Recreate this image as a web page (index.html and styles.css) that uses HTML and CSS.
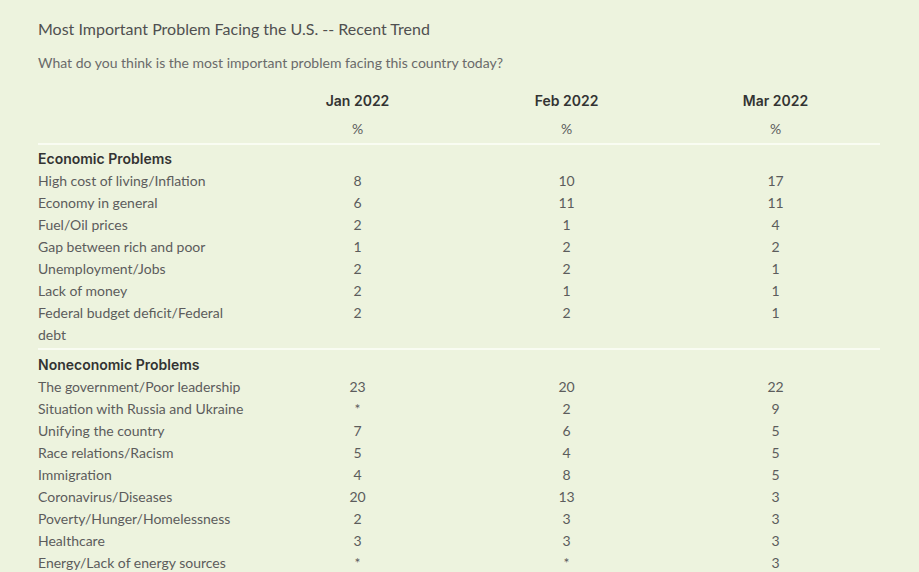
FILE: index.html
```html
<!DOCTYPE html>
<html>
<head>
<meta charset="utf-8">
<link rel="stylesheet" href="styles.css">
</head>
<body>
<div class="page">
  <h1 class="title">Most Important Problem Facing the U.S. -- Recent Trend</h1>
  <p class="subtitle">What do you think is the most important problem facing this country today?</p>
  <table class="trend">
    <colgroup>
      <col class="c-label"><col class="c-val"><col class="c-val"><col class="c-val">
    </colgroup>
    <thead>
      <tr class="h1"><th></th><th>Jan 2022</th><th>Feb 2022</th><th>Mar 2022</th></tr>
      <tr class="h2"><th></th><th>%</th><th>%</th><th>%</th></tr>
    </thead>
    <tbody>
      <tr class="sep"><td colspan="4"><div class="rule"></div></td></tr>
      <tr class="group"><td>Economic Problems</td><td></td><td></td><td></td></tr>
      <tr><td>High cost of living/Inflation</td><td>8</td><td>10</td><td>17</td></tr>
      <tr><td>Economy in general</td><td>6</td><td>11</td><td>11</td></tr>
      <tr><td>Fuel/Oil prices</td><td>2</td><td>1</td><td>4</td></tr>
      <tr><td>Gap between rich and poor</td><td>1</td><td>2</td><td>2</td></tr>
      <tr><td>Unemployment/Jobs</td><td>2</td><td>2</td><td>1</td></tr>
      <tr><td>Lack of money</td><td>2</td><td>1</td><td>1</td></tr>
      <tr><td>Federal budget deficit/Federal debt</td><td>2</td><td>2</td><td>1</td></tr>
      <tr class="sep sep-mid"><td colspan="4"><div class="rule"></div></td></tr>
      <tr class="group"><td>Noneconomic Problems</td><td></td><td></td><td></td></tr>
      <tr><td>The government/Poor leadership</td><td>23</td><td>20</td><td>22</td></tr>
      <tr><td>Situation with Russia and Ukraine</td><td>*</td><td>2</td><td>9</td></tr>
      <tr><td>Unifying the country</td><td>7</td><td>6</td><td>5</td></tr>
      <tr><td>Race relations/Racism</td><td>5</td><td>4</td><td>5</td></tr>
      <tr><td>Immigration</td><td>4</td><td>8</td><td>5</td></tr>
      <tr><td>Coronavirus/Diseases</td><td>20</td><td>13</td><td>3</td></tr>
      <tr><td>Poverty/Hunger/Homelessness</td><td>2</td><td>3</td><td>3</td></tr>
      <tr><td>Healthcare</td><td>3</td><td>3</td><td>3</td></tr>
      <tr><td>Energy/Lack of energy sources</td><td>*</td><td>*</td><td>3</td></tr>
    </tbody>
  </table>
</div>
</body>
</html>
```

FILE: styles.css
```css
html, body {
  margin: 0;
  padding: 0;
  background: #edf3de;
}
body {
  font-family: Lato, "Liberation Sans", sans-serif;
  color: #555;
}
.page {
  padding: 18px 0 0 38px;
}
.title {
  margin: 0 0 12px;
  font-size: 16px;
  line-height: 22px;
  font-weight: 400;
  color: #505050;
}
.subtitle {
  margin: 0 0 13px;
  font-size: 14px;
  line-height: 22px;
  font-weight: 400;
  color: #6a6a6a;
}
.trend {
  border-collapse: collapse;
  width: 842px;
  table-layout: fixed;
  font-size: 14px;
}
.c-label { width: 215px; }
.c-val { width: 209px; }
.trend th, .trend td {
  padding: 0;
  line-height: 22px;
  text-align: center;
  vertical-align: top;
}
.trend td:first-child {
  text-align: left;
}
.trend td {
  font-weight: 400;
  color: #5c5c5c;
}
.trend thead th {
  height: 28px;
  vertical-align: middle;
}
.h1 th {
  font-family: Inter, "Liberation Sans", sans-serif;
  font-weight: 600;
  color: #333;
}
.h2 th {
  font-weight: 400;
  color: #5c5c5c;
}
.sep td {
  padding: 0;
  line-height: 0;
}
.rule {
  height: 2px;
  background: #f9fcf2;
  margin: 0 0 3px;
}
.sep-mid .rule {
  margin: 2px 0 4px;
}
.group td {
  font-family: Inter, "Liberation Sans", sans-serif;
  font-weight: 600;
  color: #333;
}
```
